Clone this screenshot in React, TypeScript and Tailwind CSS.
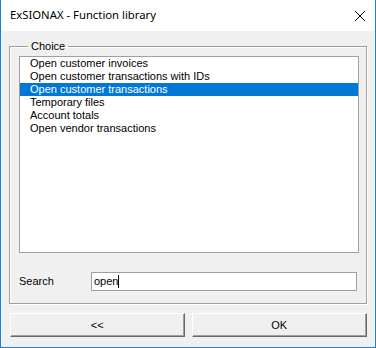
const items = [
  "Open customer invoices",
  "Open customer transactions with IDs",
  "Open customer transactions",
  "Temporary files",
  "Account totals",
  "Open vendor transactions",
];

const CloseIcon = () => (
  <svg width="12" height="12" viewBox="0 0 12 12" fill="none">
    <path d="M1 1L11 11M11 1L1 11" stroke="#000" strokeWidth="1" />
  </svg>
);

type WinButtonProps = {
  label: string;
  className?: string;
};

const WinButton = ({ label, className }: WinButtonProps) => (
  <button
    type="button"
    className={
      "h-[24px] bg-[#f0f0f0] text-[11px] text-black border-t border-l border-white border-r border-b border-r-[#696969] border-b-[#696969] shadow-[inset_-1px_-1px_0_#a0a0a0] " +
      (className ?? "")
    }
  >
    {label}
  </button>
);

export default function App() {
  const selected = 2;

  return (
    <div
      className="w-[376px] h-[348px] flex flex-col border border-t-0 border-[#1883d7] bg-[#f0f0f0] overflow-hidden"
      style={{ fontFamily: '"Liberation Sans", Arial, sans-serif' }}
    >
      <div className="h-[31px] bg-white flex items-center justify-between pl-[9px] pr-[9px] shrink-0">
        <span
          className="text-[11.3px] text-black"
          style={{ fontFamily: '"Noto Sans", "Open Sans", sans-serif' }}
        >
          ExSIONAX - Function library
        </span>
        <CloseIcon />
      </div>

      <div className="flex flex-col px-[8px] pt-[9px]">
        <fieldset className="h-[264px] border border-[#a0a0a0] shadow-[inset_1px_1px_0_#fff,1px_1px_0_#fff] pl-[9px] pr-[7px] m-0 flex flex-col">
          <legend className="ml-[9px] px-[3px] text-[11px] leading-[13px] text-black">
            Choice
          </legend>
          <div className="mt-[3px] h-[197px] bg-white border border-[#a0a0a0] flex flex-col">
            {items.map((item, i) => (
              <div
                key={item}
                className={
                  "h-[13px] leading-[13px] text-[11px] pl-[10px] whitespace-nowrap " +
                  (i === selected ? "bg-[#0078d7] text-white" : "text-black")
                }
              >
                {item}
              </div>
            ))}
          </div>
          <div className="mt-[19px] flex items-center">
            <span className="w-[72px] text-[11px] text-black">Search</span>
            <div className="w-[266px] h-[19px] bg-white border border-[#a0a0a0] flex items-center pl-[2px]">
              <span className="text-[11px] text-black leading-[13px]">open</span>
              <span className="w-[1px] h-[13px] bg-black" />
            </div>
          </div>
        </fieldset>

        <div className="mt-[9px] flex gap-[7px] pl-[1px]">
          <WinButton label="<<" className="w-[175px]" />
          <WinButton label="OK" className="w-[176px]" />
        </div>
      </div>
    </div>
  );
}
